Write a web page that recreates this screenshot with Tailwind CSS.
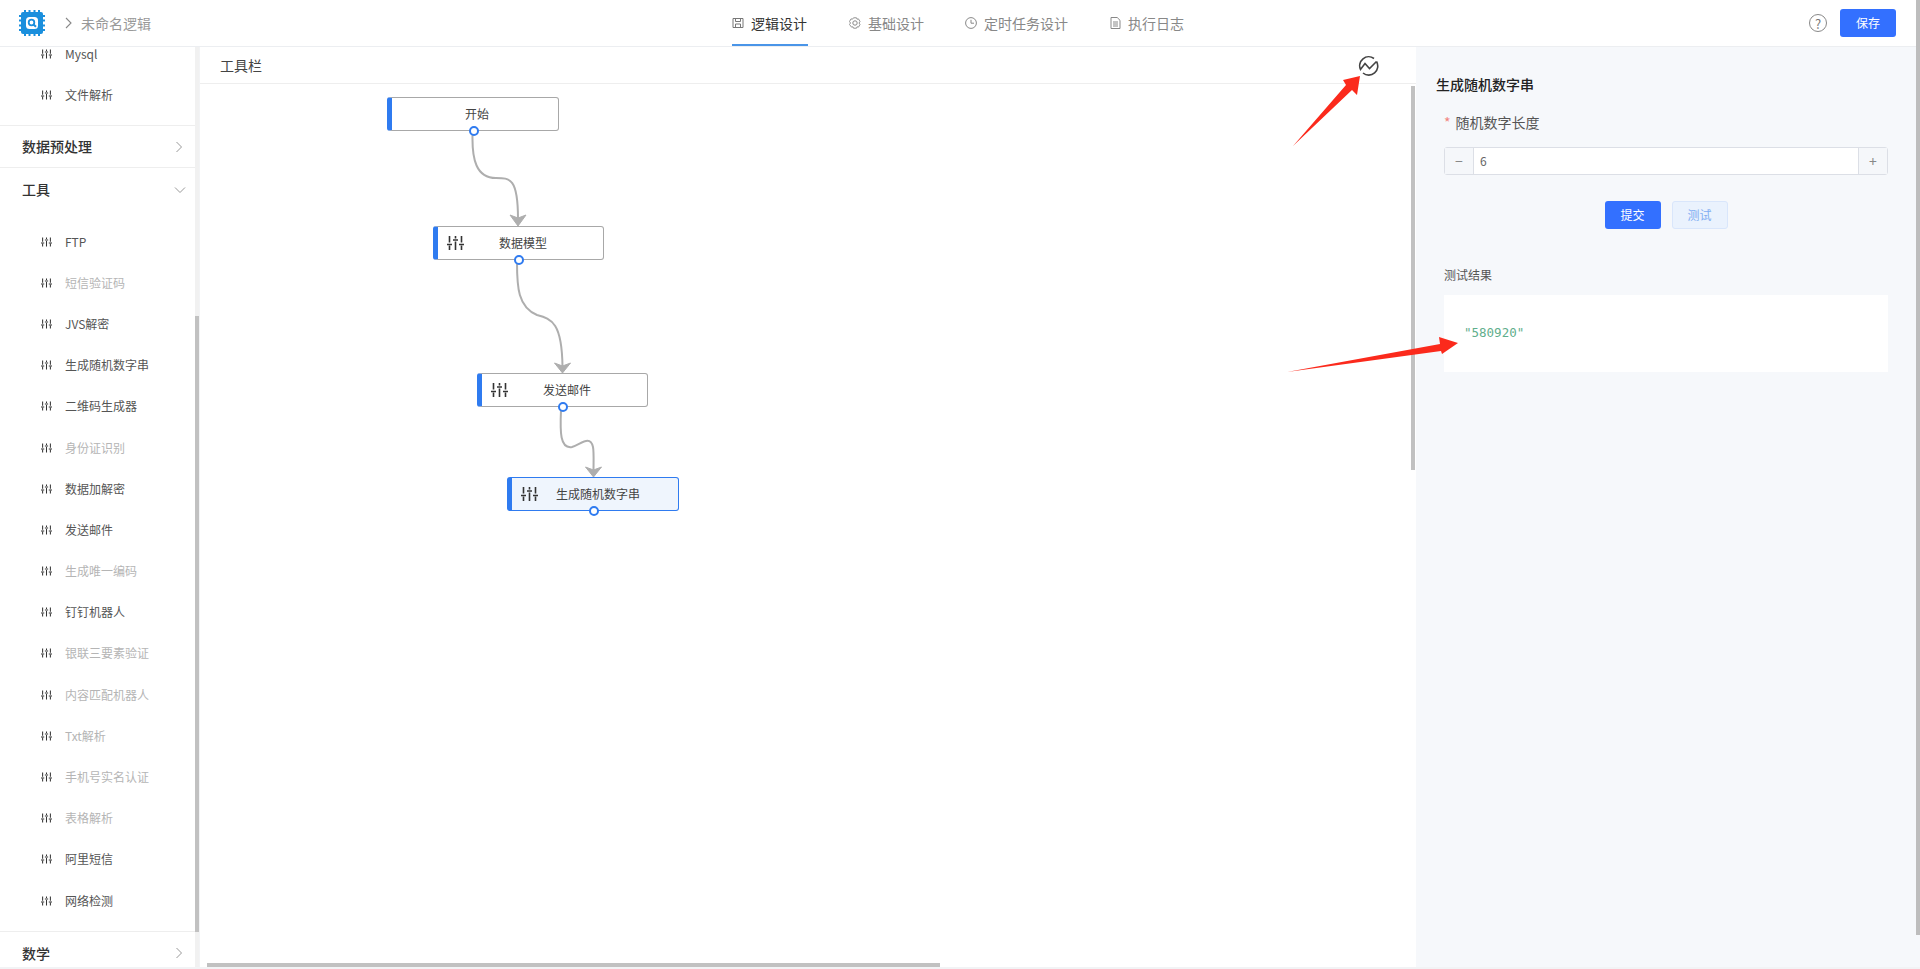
<!DOCTYPE html>
<html lang="zh-CN">
<head>
  <meta charset="UTF-8" />
  <meta name="viewport" content="width=device-width, initial-scale=1" />
  <title>未命名逻辑</title>
  <script src="https://cdn.jsdelivr.net/npm/@tailwindcss/browser@4"></script>
</head>
<body class="relative h-[969px] w-[1920px] overflow-hidden bg-[#f2f3f5] text-[14px] text-[#333] font-['Noto_Sans_CJK_SC','Noto_Sans',sans-serif]">

  <svg class="hidden">
    <symbol id="sliders" viewBox="0 0 17 14">
      <path d="M2.5 0v6.5M2.5 9.5V14M8.5 0v2.5M8.5 5.5V14M14.5 0v6.5M14.5 9.5V14" fill="none" stroke="currentColor" stroke-width="1.6" />
      <path d="M0 8.5h5M6 4h5M12 8.5h5" fill="none" stroke="currentColor" stroke-width="1.6" />
    </symbol>
  </svg>

  <!-- top bar -->
  <header class="relative flex h-[46px] items-center bg-white">
    <svg class="ml-[19px] h-[26px] w-[26px]" viewBox="0 0 26 26">
      <rect x="2" y="2" width="22" height="22" rx="2" fill="#1a8fdd" />
      <path d="M6 0v26M10.500 0v26M15.500 0v26M20 0v26M0 6h26M0 10.500h26M0 15.500h26M0 20h26" stroke="#1a8fdd" stroke-width="2" stroke-dasharray="3 20 3" />
      <rect x="7" y="7" width="12" height="12" rx="3.500" fill="#fff" />
      <circle cx="12.500" cy="12.500" r="2.800" fill="none" stroke="#1a8fdd" stroke-width="1.800" />
      <path d="M14.500 14.500l2.500 2.300" stroke="#1a8fdd" stroke-width="2" />
    </svg>
    <svg class="ml-[20px] h-[12px] w-[8px]" viewBox="0 0 8 12"><path d="M1 1l5 5-5 5" fill="none" stroke="#888" stroke-width="1.100" /></svg>
    <span class="ml-[8px] text-[#999]">未命名逻辑</span>

    <nav class="absolute left-[732px] top-0 flex h-[46px] items-center">
      <a class="relative flex h-full w-[76px] items-center gap-[7px] text-[#333]">
        <svg class="h-[12px] w-[12px]" viewBox="0 0 12 12"><path d="M1 1.500h10v9H1zM3.500 1.500v3h5v-3M3.500 10.500V7h5v3.500" fill="none" stroke="#777" stroke-width="1" /></svg>
        逻辑设计
        <span class="absolute bottom-0 left-0 h-[2px] w-full bg-[#4a95e8]"></span>
      </a>
      <a class="ml-[41px] flex items-center gap-[7px] text-[#888]">
        <svg class="h-[12px] w-[12px]" viewBox="0 0 12 12"><circle cx="6" cy="6" r="2.200" fill="none" stroke="#888" /><path d="M4.500 .8h3l.5 1.400 1.500-.3 1.500 2.600-1 1.500 1 1.500-1.500 2.600-1.500-.3-.5 1.400h-3l-.5-1.400-1.500.3L.5 7.500l1-1.500-1-1.500L2 1.900l1.500.3z" fill="none" stroke="#888" stroke-width=".9" /></svg>
        基础设计
      </a>
      <a class="ml-[41px] flex items-center gap-[7px] text-[#888]">
        <svg class="h-[12px] w-[12px]" viewBox="0 0 12 12"><circle cx="6" cy="6" r="5.400" fill="none" stroke="#888" /><path d="M6 2.800V6.200H9" fill="none" stroke="#888" /></svg>
        定时任务设计
      </a>
      <a class="ml-[42px] flex items-center gap-[7px] text-[#888]">
        <svg class="h-[12px] w-[11px]" viewBox="0 0 11 12"><path d="M1 .5h6.200L10 3.300v8.200H1zM3 5h5M3 7h5M3 9h5" fill="none" stroke="#888" /></svg>
        执行日志
      </a>
    </nav>

    <div class="ml-auto mr-[24px] flex items-center gap-[13px]">
      <span class="flex h-[18px] w-[18px] items-center justify-center rounded-full border border-[#888] text-[13px] leading-none text-[#777]">?</span>
      <button class="h-[28px] w-[56px] rounded-[3px] bg-[#3370ff] text-[12px] text-white">保存</button>
    </div>
  </header>
  <div class="h-px bg-[#eceef1]"></div>

  <div class="flex h-[920px]">
    <!-- left node list -->
    <aside class="w-[199px] shrink-0 overflow-hidden border-r-4 border-[#f1f1f1] bg-white">
      <div class="-mt-[14px] text-[12px] text-[#555]">
        <div class="flex h-[41px] items-center gap-[13px] pl-[41px]"><svg class="h-[10px] w-[11px] text-[#333]"><use href="#sliders" /></svg>Mysql</div>
        <div class="flex h-[41px] items-center gap-[13px] pl-[41px]"><svg class="h-[10px] w-[11px] text-[#333]"><use href="#sliders" /></svg>文件解析</div>
        <div class="mt-[10px] flex h-[43px] items-center justify-between border-y border-[#eeeeee] pl-[22px] pr-[12px] text-[14px] font-medium text-[#333]">数据预处理
          <svg class="h-[12px] w-[8px]" viewBox="0 0 8 12"><path d="M1.500 1l5 5-5 5" fill="none" stroke="#999" stroke-width="1" /></svg>
        </div>
        <div class="flex h-[43px] items-center justify-between pl-[22px] pr-[9px] text-[14px] font-medium text-[#333]">工具
          <svg class="h-[8px] w-[12px]" viewBox="0 0 12 8"><path d="M1 1.500l5 5 5-5" fill="none" stroke="#999" stroke-width="1" /></svg>
        </div>
        <div class="pt-[10px]">
          <div class="flex h-[41.200px] items-center gap-[13px] pl-[41px]"><svg class="h-[10px] w-[11px] text-[#333]"><use href="#sliders" /></svg>FTP</div>
          <div class="flex h-[41.200px] items-center gap-[13px] pl-[41px] text-[#b5b5b5]"><svg class="h-[10px] w-[11px] text-[#333]"><use href="#sliders" /></svg>短信验证码</div>
          <div class="flex h-[41.200px] items-center gap-[13px] pl-[41px]"><svg class="h-[10px] w-[11px] text-[#333]"><use href="#sliders" /></svg>JVS解密</div>
          <div class="flex h-[41.200px] items-center gap-[13px] pl-[41px]"><svg class="h-[10px] w-[11px] text-[#333]"><use href="#sliders" /></svg>生成随机数字串</div>
          <div class="flex h-[41.200px] items-center gap-[13px] pl-[41px]"><svg class="h-[10px] w-[11px] text-[#333]"><use href="#sliders" /></svg>二维码生成器</div>
          <div class="flex h-[41.200px] items-center gap-[13px] pl-[41px] text-[#b5b5b5]"><svg class="h-[10px] w-[11px] text-[#333]"><use href="#sliders" /></svg>身份证识别</div>
          <div class="flex h-[41.200px] items-center gap-[13px] pl-[41px]"><svg class="h-[10px] w-[11px] text-[#333]"><use href="#sliders" /></svg>数据加解密</div>
          <div class="flex h-[41.200px] items-center gap-[13px] pl-[41px]"><svg class="h-[10px] w-[11px] text-[#333]"><use href="#sliders" /></svg>发送邮件</div>
          <div class="flex h-[41.200px] items-center gap-[13px] pl-[41px] text-[#b5b5b5]"><svg class="h-[10px] w-[11px] text-[#333]"><use href="#sliders" /></svg>生成唯一编码</div>
          <div class="flex h-[41.200px] items-center gap-[13px] pl-[41px]"><svg class="h-[10px] w-[11px] text-[#333]"><use href="#sliders" /></svg>钉钉机器人</div>
          <div class="flex h-[41.200px] items-center gap-[13px] pl-[41px] text-[#b5b5b5]"><svg class="h-[10px] w-[11px] text-[#333]"><use href="#sliders" /></svg>银联三要素验证</div>
          <div class="flex h-[41.200px] items-center gap-[13px] pl-[41px] text-[#b5b5b5]"><svg class="h-[10px] w-[11px] text-[#333]"><use href="#sliders" /></svg>内容匹配机器人</div>
          <div class="flex h-[41.200px] items-center gap-[13px] pl-[41px] text-[#b5b5b5]"><svg class="h-[10px] w-[11px] text-[#333]"><use href="#sliders" /></svg>Txt解析</div>
          <div class="flex h-[41.200px] items-center gap-[13px] pl-[41px] text-[#b5b5b5]"><svg class="h-[10px] w-[11px] text-[#333]"><use href="#sliders" /></svg>手机号实名认证</div>
          <div class="flex h-[41.200px] items-center gap-[13px] pl-[41px] text-[#b5b5b5]"><svg class="h-[10px] w-[11px] text-[#333]"><use href="#sliders" /></svg>表格解析</div>
          <div class="flex h-[41.200px] items-center gap-[13px] pl-[41px]"><svg class="h-[10px] w-[11px] text-[#333]"><use href="#sliders" /></svg>阿里短信</div>
          <div class="flex h-[41.200px] items-center gap-[13px] pl-[41px]"><svg class="h-[10px] w-[11px] text-[#333]"><use href="#sliders" /></svg>网络检测</div>
        </div>
        <div class="mt-[10px] flex h-[43px] items-center justify-between border-t border-[#eeeeee] pl-[22px] pr-[12px] text-[14px] font-medium text-[#333]">数学
          <svg class="h-[12px] w-[8px]" viewBox="0 0 8 12"><path d="M1.500 1l5 5-5 5" fill="none" stroke="#999" stroke-width="1" /></svg>
        </div>
      </div>
    </aside>
    <span class="absolute left-[195px] top-[316px] h-[616px] w-[4px] bg-[#c1c1c1]"></span>

    <!-- canvas -->
    <main class="relative ml-px w-[1216px] shrink-0 bg-white">
      <div class="flex h-[37px] items-center justify-between border-b border-[#eeeeee] pl-[20px] pr-[37px] text-[#444]">
        <span>工具栏</span>
        <svg class="h-[21px] w-[21px]" viewBox="0 0 21 21"><path d="M16 3.500A9 9 0 0 0 2.500 14.500L7 8.500l4.500 5 7-7M18.500 6.500A9 9 0 0 1 5 18" fill="none" stroke="#444" stroke-width="1.600" /></svg>
      </div>

      <!-- edges, coordinates are relative to the canvas (200,47) -->
      <svg class="absolute left-0 top-0 h-[920px] w-[1216px]" fill="none" stroke="#aeaeae" stroke-width="2">
        <path d="M272.500 88C272 112 276 131 296 131 C310 131 318 131 318 172" />
        <path d="M310 168l8 11 8-11-8 3z" fill="#aeaeae" stroke-width="1" />
        <path d="M317 216C317 240 318 260 337 268 C352 272 362 276 362.500 320" />
        <path d="M354.500 316l8 10 8-10-8 3z" fill="#aeaeae" stroke-width="1" />
        <path d="M361 363C360 385 360 402 372 400 C380 398 390 387 393 400 C394 405 393.500 415 393.500 424" />
        <path d="M385.500 420l8 10 8-10-8 3z" fill="#aeaeae" stroke-width="1" />
      </svg>

      <!-- nodes -->
      <div class="absolute left-[187px] top-[50px] flex h-[34px] w-[172px] items-center justify-center rounded-[3px] border border-l-[5px] border-[#a8a8a8] border-l-[#2f7bf0] bg-white pl-[4px] text-[12px] text-[#444]">开始
        <span class="absolute bottom-[-6px] left-[77px] h-[10px] w-[10px] rounded-full border-2 border-[#2f7bf0] bg-white"></span>
      </div>
      <div class="absolute left-[233px] top-[179px] flex h-[34px] w-[171px] items-center rounded-[3px] border border-l-[5px] border-[#a8a8a8] border-l-[#2f7bf0] bg-white text-[12px] text-[#444]">
        <svg class="ml-[9px] h-[14px] w-[17px] text-[#333]"><use href="#sliders" /></svg>
        <span class="ml-[35px]">数据模型</span>
        <span class="absolute bottom-[-6px] left-[76px] h-[10px] w-[10px] rounded-full border-2 border-[#2f7bf0] bg-white"></span>
      </div>
      <div class="absolute left-[277px] top-[326px] flex h-[34px] w-[171px] items-center rounded-[3px] border border-l-[5px] border-[#a8a8a8] border-l-[#2f7bf0] bg-white text-[12px] text-[#444]">
        <svg class="ml-[9px] h-[14px] w-[17px] text-[#333]"><use href="#sliders" /></svg>
        <span class="ml-[35px]">发送邮件</span>
        <span class="absolute bottom-[-6px] left-[76px] h-[10px] w-[10px] rounded-full border-2 border-[#2f7bf0] bg-white"></span>
      </div>
      <div class="absolute left-[307px] top-[430px] flex h-[34px] w-[172px] items-center rounded-[3px] border border-l-[5px] border-[#2f7bf0] bg-[#eff5fd] text-[12px] text-[#444]">
        <svg class="ml-[9px] h-[14px] w-[17px] text-[#333]"><use href="#sliders" /></svg>
        <span class="ml-[18px]">生成随机数字串</span>
        <span class="absolute bottom-[-6px] left-[77px] h-[10px] w-[10px] rounded-full border-2 border-[#2f7bf0] bg-white"></span>
      </div>

      <span class="absolute left-[1211px] top-[39px] h-[384px] w-[4px] bg-[#c1c1c1]"></span>
      <span class="absolute left-[7px] top-[916px] h-[4px] w-[733px] bg-[#c1c1c1]"></span>
    </main>

    <!-- properties panel -->
    <section class="flex-1 bg-[#f6f8fb] pl-[20px] pr-[32px]">
      <h2 class="mt-[25px] text-[14px] font-medium leading-[24px] text-[#222]">生成随机数字串</h2>
      <div class="mt-[14px] pl-[8px]">
        <label class="block leading-[24px] text-[#555]"><span class="mr-[5px] text-[#f2857f]">*</span>随机数字长度</label>
        <div class="mt-[13px] flex h-[28px] rounded-[3px] border border-[#dcdfe6] bg-white text-[12px] text-[#666]">
          <span class="flex w-[29px] items-center justify-center border-r border-[#dcdfe6] bg-[#f5f7fa] text-[14px] text-[#888]">−</span>
          <span class="flex flex-1 items-center pl-[6px]">6</span>
          <span class="flex w-[29px] items-center justify-center border-l border-[#dcdfe6] bg-[#f5f7fa] text-[14px] text-[#888]">+</span>
        </div>
        <div class="mt-[26px] flex justify-center gap-[11px]">
          <button class="h-[28px] w-[56px] rounded-[3px] bg-[#3370ff] text-[12px] text-white">提交</button>
          <button class="h-[28px] w-[56px] rounded-[3px] border border-[#d9e6fb] bg-[#eaf2fd] text-[12px] text-[#7fadf2]">测试</button>
        </div>
        <p class="mt-[37px] text-[12px] leading-[18px] text-[#555]">测试结果</p>
        <div class="mt-[11px] flex h-[77px] items-center bg-white pl-[20px] font-['DejaVu_Sans_Mono',monospace] text-[12.500px] text-[#5fae8c]">"580920"</div>
      </div>
    </section>
  </div>

  <!-- page scrollbar -->
  <span class="absolute right-0 top-0 h-[935px] w-[4px] bg-[#bdbdbd]"></span>

  <!-- red annotation arrows -->
  <svg class="absolute left-0 top-0 h-[969px] w-[1920px]" fill="#fb2a1c">
    <polygon points="1293,146 1346,85 1343,80 1360,76 1357,95 1352,90" />
    <polygon points="1287,372 1440,344 1439,337 1458,343 1442,354 1441,351" />
  </svg>
</body>
</html>
